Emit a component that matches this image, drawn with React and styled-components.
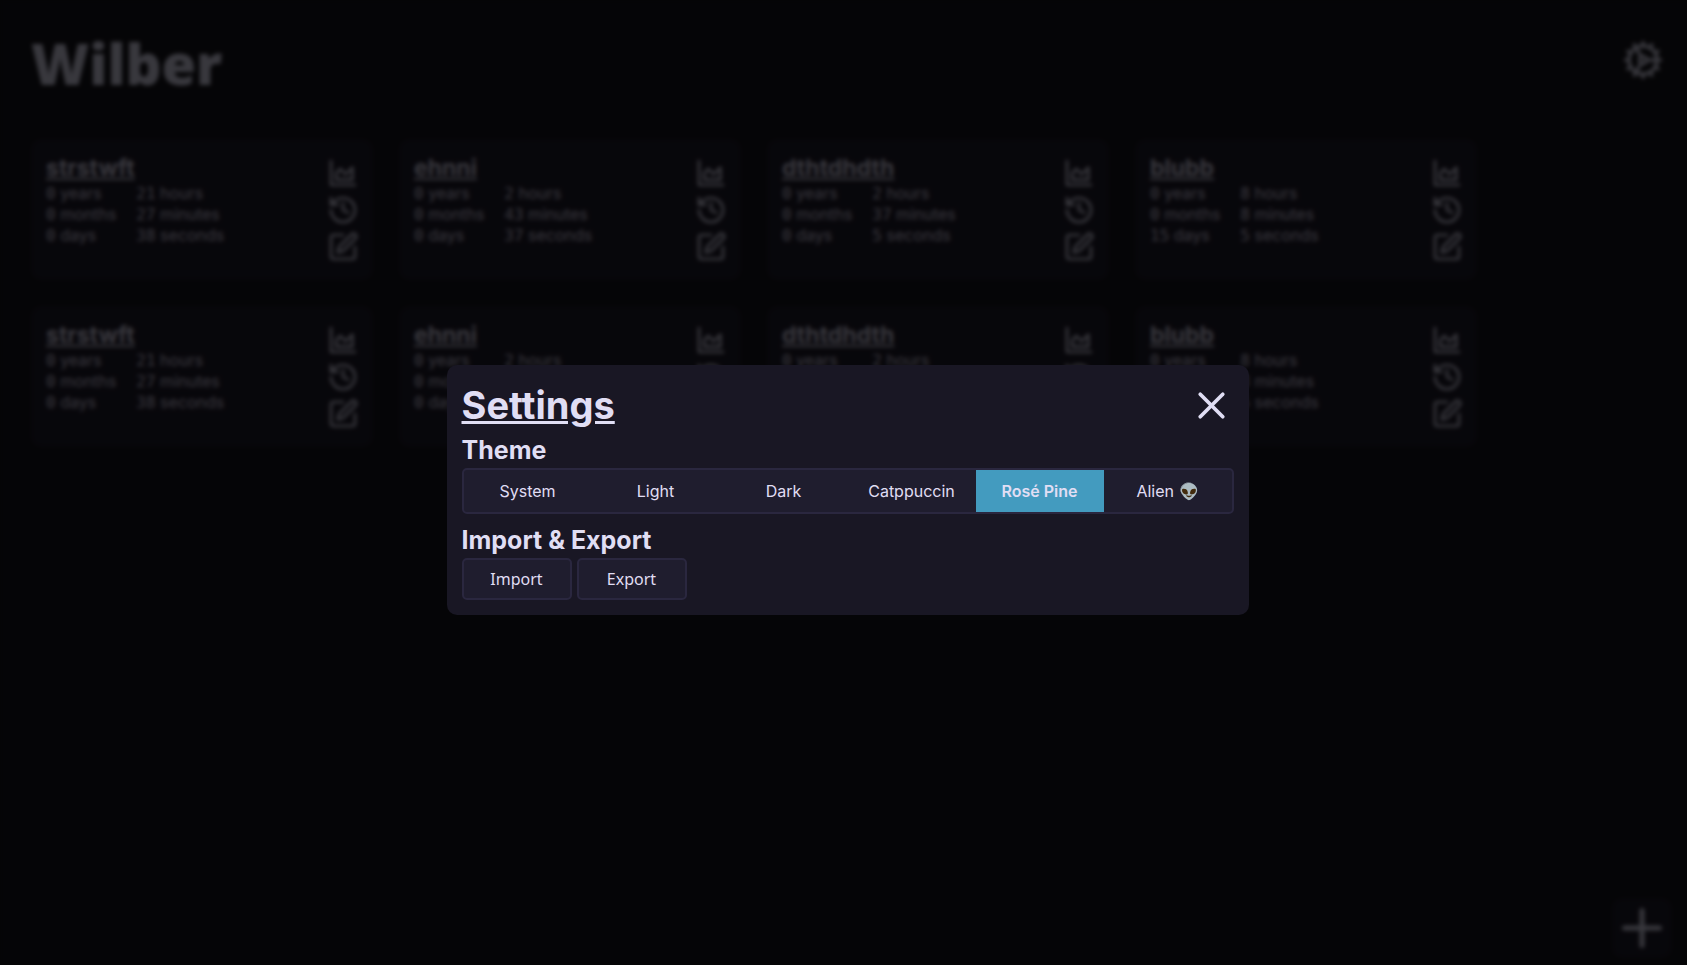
import React, { useState } from 'react'
import styled, { createGlobalStyle } from 'styled-components'

const GlobalStyle = createGlobalStyle`
  * {
    box-sizing: border-box;
    margin: 0;
  }

  body {
    background: #16151c;
    color: #e0def4;
    font-family: Inter, sans-serif;
    font-size: 16px;
  }
`

const Header = styled.header`
  display: flex;
  justify-content: space-between;
  align-items: flex-start;
  padding: 22px 23px 0 31px;
`

const Logo = styled.h1`
  font-family: 'Noto Sans', sans-serif;
  font-size: 56px;
  font-weight: 900;
  line-height: 82px;
`

const IconButton = styled.button`
  display: flex;
  padding: 0;
  border: none;
  background: none;
  color: inherit;
  cursor: pointer;
`

const SettingsButton = styled(IconButton)`
  margin-top: 17px;
`

const CardList = styled.main`
  display: flex;
  flex-wrap: wrap;
  gap: 26px;
  padding: 35px 32px 35px 31px;
`

const Card = styled.article`
  display: flex;
  justify-content: space-between;
  width: 342px;
  min-height: 141px;
  padding: 15px 14px 15px 15px;
  border-radius: 10px;
  background: #1f1c2c;
`

const CardTitle = styled.h2`
  font-size: 23px;
  line-height: 29px;
  text-decoration: underline;
`

const Durations = styled.div`
  display: flex;
  gap: 20px;
  line-height: 21px;
`

const Digits = styled.span`
  font-family: 'DejaVu Sans Mono', monospace;
  line-height: 1;
`

const CardActions = styled.div`
  display: flex;
  flex-direction: column;
  justify-content: center;
  gap: 5px;
`

const AddButton = styled(IconButton)`
  position: fixed;
  right: 15px;
  bottom: 7px;
  border-radius: 10px;
  background: #1f1c2c;
`

const Overlay = styled.div`
  position: fixed;
  inset: 0;
  display: flex;
  align-items: center;
  justify-content: center;
  padding: 15px 0 0 8px;
  background: rgba(0, 0, 0, 0.75);
  backdrop-filter: blur(2px);
`

const Modal = styled.section`
  width: 802px;
  max-width: 100%;
  padding: 15px;
  border-radius: 10px;
  background: #191724;
`

const ModalHeader = styled.div`
  display: flex;
  align-items: center;
  justify-content: space-between;
  height: 50px;
  margin-bottom: 4px;
`

const ModalTitle = styled.h2`
  font-size: 38px;
  line-height: 48px;
  text-decoration: underline;
`

const Group = styled.fieldset`
  padding: 0;
  border: none;

  & + & {
    margin-top: 10px;
  }
`

const GroupTitle = styled.legend`
  padding: 0 0 2px;
  font-size: 25px;
  font-weight: 700;
  line-height: 32px;
`

const ThemePicker = styled.div`
  display: flex;
  border: 2px solid #2a273f;
  border-radius: 5px;
  background: #1f1d2e;
  overflow: hidden;
`

const ThemeOption = styled.label`
  position: relative;
  flex: 1 1 0;
  line-height: 42px;
  text-align: center;
  cursor: pointer;
  font-weight: ${({ $active }) => ($active ? 600 : 400)};
  background: ${({ $active }) => ($active ? '#439bbf' : 'transparent')};
`

const HiddenRadio = styled.input`
  position: absolute;
  inset: 0;
  margin: 0;
  opacity: 0;
`

const ButtonRow = styled.div`
  display: flex;
  gap: 5px;
`

const Button = styled.button`
  width: 110px;
  height: 42px;
  border: 2px solid #2a273f;
  border-radius: 5px;
  background: #1f1d2e;
  color: inherit;
  font-family: 'Noto Sans', sans-serif;
  font-size: 16px;
  cursor: pointer;
`

const paths = {
  chart: ['M3 3v18h18', 'M7 12v5h12V8l-5 5-4-4Z'],
  history: [
    'M3 12a9 9 0 1 0 9-9 9.75 9.75 0 0 0-6.74 2.74L3 8',
    'M3 3v5h5',
    'M12 7v5l4 2',
  ],
  edit: [
    'M12 3H5a2 2 0 0 0-2 2v14a2 2 0 0 0 2 2h14a2 2 0 0 0 2-2v-7',
    'M18.375 2.625a2.121 2.121 0 1 1 3 3L12 15l-4 1 1-4Z',
  ],
  cog: [
    'M12 20a8 8 0 1 0 0-16 8 8 0 0 0 0 16Z',
    'M12 14a2 2 0 1 0 0-4 2 2 0 0 0 0 4Z',
    'M12 2v2',
    'M12 22v-2',
    'm17 20.66-1-1.73',
    'M11 10.27 7 3.34',
    'm20.66 17-1.73-1',
    'm3.34 7 1.73 1',
    'M14 12h8',
    'M2 12h2',
    'm20.66 7-1.73 1',
    'm3.34 17 1.73-1',
    'm17 3.34-1 1.73',
    'm11 13.73-4 6.93',
  ],
  plus: ['M5 12h14', 'M12 5v14'],
  close: ['M18 6 6 18', 'm6 6 12 12'],
}

const Icon = ({ name, size = 32 }) => (
  <svg
    width={size}
    height={size}
    viewBox="0 0 24 24"
    fill="none"
    stroke="currentColor"
    strokeWidth="2"
    strokeLinecap="round"
    strokeLinejoin="round"
    aria-hidden="true"
  >
    {paths[name].map(d => (
      <path key={d} d={d} />
    ))}
  </svg>
)

const timers = [
  { name: 'strstwft', time: [0, 0, 0, 21, 27, 38] },
  { name: 'ehnni', time: [0, 0, 0, 2, 43, 37] },
  { name: 'dthtdhdth', time: [0, 0, 0, 2, 37, 5] },
  { name: 'blubb', time: [0, 0, 15, 8, 8, 5] },
]

const themes = ['System', 'Light', 'Dark', 'Catppuccin', 'Rosé Pine', 'Alien 👽']

const Duration = ({ value, unit }) => (
  <p>
    <Digits>{value}</Digits> {unit}
  </p>
)

const TimerCard = ({ name, time }) => {
  const [years, months, days, hours, minutes, seconds] = time
  return (
    <Card>
      <div>
        <CardTitle>{name}</CardTitle>
        <Durations>
          <div>
            <Duration value={years} unit="years" />
            <Duration value={months} unit="months" />
            <Duration value={days} unit="days" />
          </div>
          <div>
            <Duration value={hours} unit="hours" />
            <Duration value={minutes} unit="minutes" />
            <Duration value={seconds} unit="seconds" />
          </div>
        </Durations>
      </div>
      <CardActions>
        <IconButton aria-label="Statistics">
          <Icon name="chart" />
        </IconButton>
        <IconButton aria-label="History">
          <Icon name="history" />
        </IconButton>
        <IconButton aria-label="Edit">
          <Icon name="edit" />
        </IconButton>
      </CardActions>
    </Card>
  )
}

const SettingsModal = ({ onClose }) => {
  const [theme, setTheme] = useState('Rosé Pine')
  return (
    <Overlay>
      <Modal role="dialog" aria-labelledby="settings-title">
        <ModalHeader>
          <ModalTitle id="settings-title">Settings</ModalTitle>
          <IconButton aria-label="Close" onClick={onClose}>
            <Icon name="close" size={45} />
          </IconButton>
        </ModalHeader>
        <Group>
          <GroupTitle>Theme</GroupTitle>
          <ThemePicker>
            {themes.map(t => (
              <ThemeOption key={t} $active={t === theme}>
                <HiddenRadio
                  type="radio"
                  name="theme"
                  checked={t === theme}
                  onChange={() => setTheme(t)}
                />
                {t}
              </ThemeOption>
            ))}
          </ThemePicker>
        </Group>
        <Group>
          <GroupTitle>Import &amp; Export</GroupTitle>
          <ButtonRow>
            <Button>Import</Button>
            <Button>Export</Button>
          </ButtonRow>
        </Group>
      </Modal>
    </Overlay>
  )
}

const App = () => {
  const [showSettings, setShowSettings] = useState(true)
  return (
    <>
      <GlobalStyle />
      <Header>
        <Logo>Wilber</Logo>
        <SettingsButton
          aria-label="Settings"
          onClick={() => setShowSettings(true)}
        >
          <Icon name="cog" size={42} />
        </SettingsButton>
      </Header>
      <CardList>
        {[...timers, ...timers].map((timer, i) => (
          <TimerCard key={i} {...timer} />
        ))}
      </CardList>
      <AddButton aria-label="Add">
        <Icon name="plus" size={60} />
      </AddButton>
      {showSettings && <SettingsModal onClose={() => setShowSettings(false)} />}
    </>
  )
}

export default App
